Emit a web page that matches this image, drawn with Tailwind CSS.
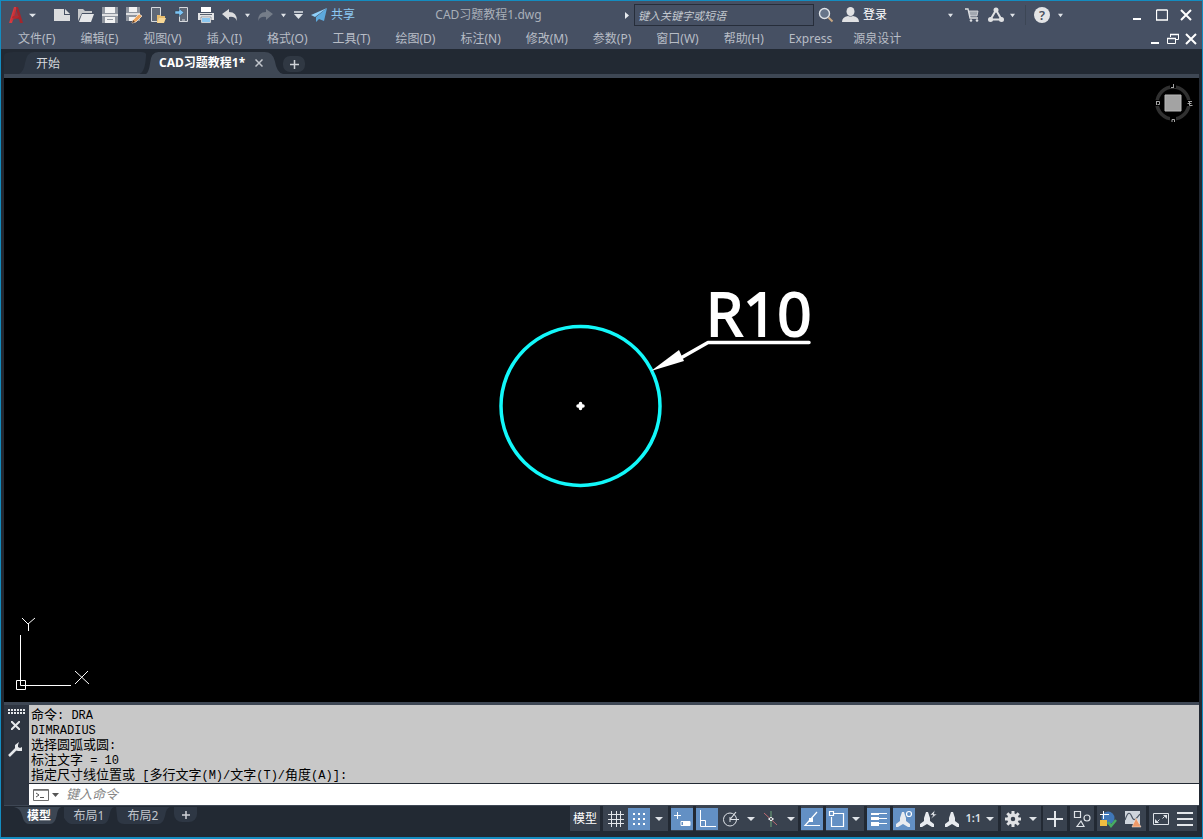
<!DOCTYPE html>
<html lang="zh-CN">
<head>
<meta charset="utf-8">
<title>CAD习题教程1.dwg</title>
<script src="https://cdn.jsdelivr.net/npm/@tailwindcss/browser@4"></script>
</head>
<body class="h-screen overflow-hidden flex flex-col bg-[#222933] border-x border-t border-b-2 border-[#148cc0] text-xs text-[#dfe3e8] font-['Noto_Sans','Noto_Sans_CJK_SC',sans-serif]">
<svg class="hidden" aria-hidden="true">
  <symbol id="dn" viewBox="0 0 8 8"><path d="M0 2h8L4 6z" fill="#dfe3e8"/></symbol>
  <symbol id="dns" viewBox="0 0 6 6"><path d="M0 1h6L3 5z" fill="#dfe3e8"/></symbol>
  <symbol id="annot" viewBox="0 0 16 18"><path d="M7 2h2l2 6v3l4 3v3h-2l-5-3-5 3H1v-3l4-3V8z" fill="#e8ebef"/></symbol>
</svg>

<header class="bg-[#465063] shrink-0">
  <div class="flex h-7 items-center">
    <button aria-label="应用程序菜单" class="w-[39px] h-6 flex items-center pl-2 gap-[5px]">
      <svg class="w-[15px] h-4" viewBox="0 0 15 16"><path d="M5 0h3L3 16H0z" fill="#d63a3f"/><path d="M7 0h2l5 16h-3l-1-4-7-1 1-2 5 0z" fill="#a3262c"/><path d="M6 1 2 14l8-4z" fill="#c02c32" opacity=".6"/></svg>
      <svg class="w-[7px] h-[7px]"><use href="#dn"/></svg>
    </button>
    <div class="flex ml-[10px]">
      <button aria-label="新建" class="size-6 grid place-items-center"><svg class="size-[18px]" viewBox="0 0 18 18"><path d="M1 3h10v6h6v6H1z" fill="#dcdddf"/><path d="M12 3 17 8h-5z" fill="#dcdddf"/></svg></button>
      <button aria-label="打开" class="size-6 grid place-items-center"><svg class="size-[18px]" viewBox="0 0 18 18"><path d="M1 15V3h5l2 2h7v2H5z" fill="#c6c8cb"/><path d="M5 8h12l-3 8H2z" fill="#e6e7e9"/></svg></button>
      <button aria-label="保存" class="size-6 grid place-items-center"><svg class="size-[18px]" viewBox="0 0 18 18"><path d="M1 1h16v16H1z" fill="#8f959f"/><path d="M4 1h10v6H4zM4 11h10v6H4z" fill="#f1f2f3"/><path d="M1 8h16v2H1z" fill="#dfe0e2"/><path d="M6 13h6v1H6z" fill="#9399a2"/></svg></button>
      <button aria-label="另存为" class="size-6 grid place-items-center"><svg class="size-[18px]" viewBox="0 0 18 18"><path d="M1 1h14v14H1z" fill="#8f959f"/><path d="M4 1h8v5H4zM4 11h6v4H4z" fill="#f1f2f3"/><path d="M1 7h14v2H1z" fill="#dfe0e2"/><path d="m8 14 6-6 3 2-6 6-4 1z" fill="#eda45c" stroke="#fff2e2" stroke-width=".7"/><path d="m7 17 1-3 2 2z" fill="#58371e"/></svg></button>
      <button aria-label="从 Web 和 Mobile 中打开" class="size-6 grid place-items-center"><svg class="size-[18px]" viewBox="0 0 18 18"><path d="M2.500 1.500h9v14h-9z" fill="#606977" stroke="#d7dade"/><path d="M8 17V9h3l1 1h4v2z" fill="#e8bd6e"/><path d="M10 12h7l-2 5H8z" fill="#f7d795"/></svg></button>
      <button aria-label="保存到 Web 和 Mobile" class="size-6 grid place-items-center"><svg class="size-[18px]" viewBox="0 0 18 18"><path d="M6.500 1.500h8v14h-8z" fill="#606977" stroke="#d7dade"/><path d="M9 14h3" stroke="#d7dade"/><path d="M2 5h4V2.500L11 6.500l-5 4V8H2z" fill="#7cc4f5" stroke="#33424f" stroke-width=".5"/></svg></button>
      <button aria-label="打印" class="size-6 grid place-items-center"><svg class="size-[18px]" viewBox="0 0 18 18"><path d="M4 1h10v5H4z" fill="#fff"/><path d="M1 7h16v7H1z" fill="#e3e4e6"/><path d="M3 8.500h12" stroke="#59616e"/><path d="M4 11h10v6H4z" fill="#fff" stroke="#59616e" stroke-width=".6"/><path d="M5 12h8v4H5z" fill="#8bc7f0"/></svg></button>
      <button aria-label="放弃" class="size-6 grid place-items-center"><svg class="size-[18px]" viewBox="0 0 18 18"><path d="M1 8l7-5v3q8 0 8 9-2-5-8-4v3z" fill="#dcdddf"/></svg></button>
      <button aria-label="放弃列表" class="w-[10px] h-6 grid place-items-center"><svg class="size-[5px]"><use href="#dns"/></svg></button>
      <button aria-label="重做" class="w-[26px] h-6 grid place-items-center"><svg class="size-[18px]" viewBox="0 0 18 18"><path d="M17 8l-7-5v3q-8 0-8 9 2-5 8-4v3z" fill="#757d89"/></svg></button>
      <button aria-label="重做列表" class="w-[10px] h-6 grid place-items-center"><svg class="size-[5px]"><use href="#dns"/></svg></button>
      <button aria-label="自定义快速访问工具栏" class="w-5 h-6 grid place-items-center"><svg class="w-[9px] h-2" viewBox="0 0 9 8"><path d="M0 1h9" stroke="#dfe3e8" stroke-width="1.500"/><path d="M0 3h9L4.500 8z" fill="#dfe3e8"/></svg></button>
    </div>
    <button class="flex items-center gap-1 ml-[3px] text-[#8cc8f2]"><svg class="w-4 h-[14px]" viewBox="0 0 16 14"><path d="M16 0 0 7l4 2z" fill="#8fd0fb"/><path d="M16 0 5 9v5l3-3 5 2z" fill="#5da9dd"/></svg>共享</button>
    <div class="flex-1 text-center text-[#a9afb9]">CAD习题教程1.dwg</div>
    <form class="flex items-center">
      <button type="button" aria-label="展开搜索" class="w-[10px] h-6 grid place-items-center"><svg class="w-1 h-[7px]" viewBox="0 0 4 7"><path d="M0 0v7l4-3.500z" fill="#e8ebef"/></svg></button>
      <input aria-label="搜索" placeholder="键入关键字或短语" class="w-[180px] h-[22px] ml-0.5 px-[3px] border border-[#262d3a] bg-[#465063] text-[11px] italic outline-none placeholder:text-[#c4c9d0]">
      <button type="button" aria-label="查找" class="size-6 grid place-items-center"><svg class="size-4" viewBox="0 0 16 16"><path d="m10.500 10.500 4 4" stroke="#c8a781" stroke-width="2"/><circle cx="6.500" cy="6.500" r="5" fill="#67758a" stroke="#dfe3e8" stroke-width="1.400"/></svg></button>
    </form>
    <button class="flex items-center gap-1 ml-1 text-white"><svg class="w-[17px] h-4" viewBox="0 0 17 16"><ellipse cx="8.500" cy="4.500" rx="4" ry="4.500" fill="#e0e1e3"/><path d="M0 15q0-5 6-6 2.500 1 5 0 6 1 6 6z" fill="#e0e1e3"/></svg>登录</button>
    <button aria-label="登录选项" class="w-[10px] h-6 ml-[58px] grid place-items-center"><svg class="size-[5px]"><use href="#dns"/></svg></button>
    <button aria-label="应用商店" class="size-6 ml-[5px] grid place-items-center"><svg class="size-[14px]" viewBox="0 0 14 14"><path d="M0 1h3l2 9h8" fill="none" stroke="#dfe1e4" stroke-width="1.300"/><path d="M4 3h9l-1 5H5z" fill="#a2a8b1" stroke="#dfe1e4" stroke-width=".8"/><circle cx="6" cy="12.500" r="1.300" fill="#dfe1e4"/><circle cx="12" cy="12.500" r="1.300" fill="#dfe1e4"/></svg></button>
    <button aria-label="Autodesk App" class="w-6 h-6 grid place-items-center"><svg class="size-4" viewBox="0 0 16 16"><path d="M8 3 2.500 12.500h11z" fill="none" stroke="#e0e1e3" stroke-width="2"/><circle cx="8" cy="3" r="2.500" fill="#e0e1e3"/><circle cx="2.500" cy="12.500" r="2.500" fill="#e0e1e3"/><circle cx="13.500" cy="12.500" r="2.500" fill="#e0e1e3"/></svg></button>
    <button aria-label="App 选项" class="w-[9px] h-6 grid place-items-center"><svg class="size-[5px]"><use href="#dns"/></svg></button>
    <span class="w-px h-5 bg-[#3c4655] ml-2"></span>
    <button aria-label="帮助" class="size-6 ml-1 grid place-items-center"><span class="size-4 rounded-full bg-[#e3e4e6] text-[#48505d] font-semibold text-[13px] leading-4">?</span></button>
    <button aria-label="帮助选项" class="w-3 h-6 grid place-items-center"><svg class="size-[5px]"><use href="#dns"/></svg></button>
    <div class="flex ml-[58px] mr-1">
      <button aria-label="最小化" class="w-[25px] h-6 grid place-items-center"><svg class="size-3" viewBox="0 0 12 12"><path d="M2 10h8" stroke="#fff" stroke-width="2"/></svg></button>
      <button aria-label="最大化" class="w-[25px] h-6 grid place-items-center"><svg class="size-3" viewBox="0 0 12 12"><path d="M.5 1h11M.5 1v10h11V1" fill="none" stroke="#fff" stroke-width="1.300"/></svg></button>
      <button aria-label="关闭" class="w-6 h-6 grid place-items-center"><svg class="size-3" viewBox="0 0 12 12"><path d="m1 1 10 10M11 1 1 11" stroke="#fff" stroke-width="2"/></svg></button>
    </div>
  </div>
  <nav class="flex h-5 items-center pl-[17px] gap-[25px] whitespace-nowrap text-[#b8bdc6]">
    <a href="#">文件(F)</a><a href="#">编辑(E)</a><a href="#">视图(V)</a><a href="#">插入(I)</a><a href="#">格式(O)</a><a href="#">工具(T)</a><a href="#">绘图(D)</a><a href="#">标注(N)</a><a href="#">修改(M)</a><a href="#">参数(P)</a><a href="#">窗口(W)</a><a href="#">帮助(H)</a><a href="#">Express</a><a href="#" class="-ml-1">源泉设计</a>
    <div class="ml-auto flex mr-0.5">
      <button aria-label="最小化图形" class="w-[18px] h-5 grid place-items-center"><svg class="size-3" viewBox="0 0 12 12"><path d="M2 10h8" stroke="#fff" stroke-width="2"/></svg></button>
      <button aria-label="还原图形" class="w-[18px] h-5 grid place-items-center"><svg class="size-3" viewBox="0 0 12 12"><path d="M3.500 4V1.500h8v5H9M.5 5.500h8v5h-8z" fill="none" stroke="#fff"/><path d="M3 1.500h9M0 5.500h9" stroke="#fff" stroke-width="1.600"/></svg></button>
      <button aria-label="关闭图形" class="w-[18px] h-5 grid place-items-center"><svg class="size-3" viewBox="0 0 12 12"><path d="m1 1 10 10M11 1 1 11" stroke="#fff" stroke-width="2"/></svg></button>
    </div>
  </nav>
</header>

<div class="flex items-start h-[25px] shrink-0 pt-[3px] pl-[3px]">
  <div class="relative h-[22px] w-[142px]">
    <svg class="absolute inset-0 w-full h-full" viewBox="0 0 142 22" preserveAspectRatio="none"><path d="M0 22h16q5-3 6-11 2-10 9-11H9Q0 0 0 4z" fill="#262e39"/><path d="M15 22q5-3 6-11 2-11 9-11h107q6 0 5 4-1 18-8 18z" fill="#2e3744"/></svg>
    <button class="relative pl-8 leading-6 text-[#d5d8dd]">开始</button>
  </div>
  <div class="relative h-[22px] w-[137px] flex items-center pl-[13px] gap-[10px]">
    <svg class="absolute inset-0 w-full h-full" viewBox="0 0 134 22" preserveAspectRatio="none"><path d="M0 22Q3 20 4 11 5 0 12 0h104q8 0 10 9 2 12 8 13z" fill="#3e4754"/></svg>
    <button class="relative font-bold text-white whitespace-nowrap">CAD习题教程1*</button>
    <button aria-label="关闭选项卡" class="relative"><svg class="size-2" viewBox="0 0 8 8"><path d="m.5.5 7 7m0-7-7 7" stroke="#c2c6cc" stroke-width="1.500"/></svg></button>
  </div>
  <button aria-label="新选项卡" class="w-[22px] h-4 mt-1 grid place-items-center rounded-[7px] bg-[#303843]"><svg class="size-[9px]" viewBox="0 0 9 9"><path d="M0 4.500h9M4.500 0v9" stroke="#cfd2d7" stroke-width="1.500"/></svg></button>
</div>
<div class="h-1 shrink-0 bg-[#3e4754] mx-[3px]"></div>

<main class="flex-1 min-h-0 relative bg-black mx-[3px]">
  <svg class="absolute inset-0 w-full h-full" viewBox="0 0 1195 624">
    <circle cx="576.500" cy="328" r="79.500" fill="none" stroke="#12f8fa" stroke-width="3.500"/>
    <path d="M576.500 325.500v5M574 328h5" stroke="#fff" stroke-width="3.500" stroke-linecap="round"/>
    <path d="M675 281 704 264.500h101" fill="none" stroke="#fff" stroke-width="3.500" stroke-linecap="round" stroke-linejoin="round"/>
    <path d="M647 293 675 272l5 11z" fill="#fff"/>
    <text x="702" y="258" fill="#fff" stroke="#fff" stroke-width="2" font-size="60" style="font-family:'Open Sans',sans-serif">R10</text>
  </svg>
  <svg class="absolute top-1 right-0 w-11 h-[42px]" viewBox="0 0 44 42">
    <circle cx="18" cy="21" r="16" fill="none" stroke="#303030" stroke-width="3.500"/>
    <path d="M10 13h16v16H10z" fill="#a3a3a3" stroke="#b8b8b8"/>
    <path d="M15 1h6v5h-6zM15 35h6v5h-6zM0 18h5v6H0zM32 18h5v6h-5z" fill="#000"/>
    <path d="M18.500 2v3.500M16 5.500h3M17 40v-2.500h2.500V40M1.500 19v4M1.500 19.500h3v3h-2M33 19.500h4M32.500 21.500h4M34.500 19v4.500h3" fill="none" stroke="#a5a5a5"/>
  </svg>
  <svg class="absolute left-0 bottom-0 w-[100px] h-[100px]" viewBox="0 0 100 100" fill="none" stroke="#fff">
    <path d="M16.500 33v50.500H67M12.500 78.500h9v9h-9zM18 16l6 6 7-6M24.500 22v7M71 69l14 13M84 69 71 82"/>
  </svg>
</main>

<section aria-label="命令行" class="shrink-0 mx-[3px] border-t-[3px] border-[#3e4754] flex bg-[#2e3541]">
  <div class="w-[25px] flex flex-col items-center pr-0.5 pt-1">
    <svg class="w-[18px] h-[5px] ml-0.5" viewBox="0 0 18 5"><path d="M0 1h18M0 4h18" stroke="#e6e8eb" stroke-width="2" stroke-dasharray="2 1"/></svg>
    <button aria-label="关闭命令行" class="mt-[7px]"><svg class="size-[9px]" viewBox="0 0 9 9"><path d="m0 0 9 9M9 0 0 9" stroke="#e6e8eb" stroke-width="2"/></svg></button>
    <button aria-label="自定义" class="mt-3"><svg class="w-[15px] h-4" viewBox="0 0 15 16"><path d="m1 14 8-8" stroke="#e6e8eb" stroke-width="2.500"/><path d="M11 0 7 3v5l3 1h4V5l-2 1-2-1V3z" fill="#e6e8eb"/></svg></button>
  </div>
  <div class="flex-1 min-w-0">
    <div class="h-[79px] bg-[#c8c8c8] border-b border-[#222933] pt-[3px] pl-0.5 text-black text-[13px] leading-[15px] whitespace-pre font-['Liberation_Mono','Noto_Sans_CJK_SC',monospace] *:h-[15px]"><p>命令<span class="text-xs">: DRA</span></p><p><span class="text-xs">DIMRADIUS</span></p><p>选择圆弧或圆<span class="text-xs">:</span></p><p>标注文字<span class="text-xs"> = 10</span></p><p>指定尺寸线位置或<span class="text-xs"> [</span>多行文字<span class="text-xs">(M)/</span>文字<span class="text-xs">(T)/</span>角度<span class="text-xs">(A)]:</span></p></div>
    <div class="h-[21px] bg-white flex items-center pl-1">
      <button aria-label="最近使用的命令" class="flex items-center gap-[3px]"><svg class="w-4 h-3" viewBox="0 0 16 12"><path d="M.5.5h15v11H.5z" fill="#fff" stroke="#6d6d6d"/><path d="M1 1.500h14" stroke="#8d8d8d"/><path d="m3 4 3 2-3 2M7 8.500h4" fill="none" stroke="#555"/></svg><svg class="w-[7px] h-1" viewBox="0 0 7 4"><path d="M0 0h7L3.500 4z" fill="#555"/></svg></button>
      <input aria-label="命令" placeholder="键入命令" class="flex-1 ml-[7px] text-[13px] text-black italic outline-none placeholder:text-[#858585]">
    </div>
  </div>
</section>

<footer class="shrink-0 h-8 flex items-start border-t border-[#3e4754] mx-[3px]">
  <div class="flex pl-[10px] pt-px">
    <button class="relative w-[50px] h-[17px] font-bold text-white"><svg class="absolute inset-0 w-full h-full" viewBox="0 0 54 17" preserveAspectRatio="none"><path d="M0 0h51q-4 1-5 9-2 8-7 8H16q-5 0-7-8Q7 1 0 0z" fill="#3c4653"/></svg><span class="relative leading-[17px] block">模型</span></button>
    <button class="relative w-[50px] h-[17px] text-[#c2c6cd]"><svg class="absolute inset-0 w-full h-full" viewBox="0 0 54 17" preserveAspectRatio="none"><path d="M0 0h54q-4 1-5 9-2 8-7 8H8q-5 0-9-8z" fill="#2e3744"/></svg><span class="relative leading-[17px] block">布局1</span></button>
    <button class="relative w-[54px] h-[17px] ml-0.5 text-[#c2c6cd]"><svg class="absolute inset-0 w-full h-full" viewBox="0 0 54 17" preserveAspectRatio="none"><path d="M0 0h54q-4 1-5 9-2 8-7 8H8q-7 0-7-8z" fill="#2e3744"/></svg><span class="relative leading-[17px] block">布局2</span></button>
    <button aria-label="新建布局" class="w-[23px] h-[15px] ml-1 grid place-items-center bg-[#2e3744] rounded-b-lg"><svg class="size-2" viewBox="0 0 8 8"><path d="M0 4h8M4 0v8" stroke="#cfd2d7" stroke-width="1.500"/></svg></button>
  </div>
  <div class="ml-auto mr-0.5 flex h-[25px] gap-[3px] *:bg-[#39424f] *:flex *:items-center">
    <div><button class="w-[30px] text-white">模型</button></div>
    <div>
      <button aria-label="栅格" class="w-[25px] h-[22px] grid place-items-center"><svg class="size-4" viewBox="0 0 16 16"><path d="M3.500 0v16M8.500 0v16M12.500 0v16M0 3.500h16M0 8.500h16M0 12.500h16" stroke="#e3e6ea" fill="none"/></svg></button>
      <button aria-label="捕捉" class="w-[22px] h-[22px] grid place-items-center bg-[#6390c4]"><svg class="size-[14px]" viewBox="0 0 14 14"><path d="M1 2h14M1 7h14M1 12h14" stroke="#fff" stroke-width="2" stroke-dasharray="2 3"/></svg></button>
      <button aria-label="捕捉选项" class="w-[18px] h-[22px] grid place-items-center"><svg class="size-2"><use href="#dn"/></svg></button>
    </div>
    <div><button aria-label="动态输入" class="w-[22px] h-[22px] grid place-items-center bg-[#6390c4]"><svg class="size-[18px]" viewBox="0 0 18 18"><path d="M4.500 2v7M1 5.500h7M8 11.500h9v4H8z" stroke="#fff" fill="none"/><path d="M10 11h7v5h-7z" fill="#fff"/></svg></button></div>
    <div>
      <button aria-label="正交" class="w-[22px] h-[22px] grid place-items-center bg-[#6390c4]"><svg class="size-[18px]" viewBox="0 0 18 18"><path d="M2.500 0v16.500H18M2.500 10.500h5v6" stroke="#fff" fill="none"/></svg></button>
      <button aria-label="极轴追踪" class="w-[26px] h-[22px] grid place-items-center"><svg class="size-[18px]" viewBox="0 0 18 18"><circle cx="8" cy="9.500" r="6.500" fill="none" stroke="#dfe3e8"/><path d="M8 9.500 14 2M8 9.500h9" stroke="#dfe3e8" stroke-width="1.200"/><path d="M8 7v5" stroke="#dfe3e8"/></svg></button>
      <button aria-label="极轴选项" class="w-[14px] h-[22px] grid place-items-center"><svg class="size-2"><use href="#dn"/></svg></button>
      <button aria-label="等轴测草图" class="w-[26px] h-[22px] grid place-items-center"><svg class="size-4" viewBox="0 0 16 16"><path d="M8 0v16" stroke="#6fa67c"/><path d="m1 2 13 12" stroke="#bd6a72"/><path d="M5 8h6" stroke="#dfe3e8"/><circle cx="8" cy="8" r="1.500" fill="#222933" stroke="#fff"/></svg></button>
      <button aria-label="等轴测选项" class="w-[14px] h-[22px] grid place-items-center"><svg class="size-2"><use href="#dn"/></svg></button>
    </div>
    <div><button aria-label="对象捕捉追踪" class="w-[22px] h-[22px] grid place-items-center bg-[#6390c4]"><svg class="size-[18px]" viewBox="0 0 18 18"><path d="M14 2 2 15.500h15" stroke="#fff" stroke-width="1.200" fill="none"/><path d="M6 8h4v4H6z" fill="#fff"/></svg></button></div>
    <div>
      <button aria-label="对象捕捉" class="w-[22px] h-[22px] grid place-items-center bg-[#6390c4]"><svg class="size-[18px]" viewBox="0 0 18 18"><path d="M6 3.500h9.500v13h-12V7M1.500 1.500h4v4h-4z" stroke="#fff" fill="none" stroke-width="1.200"/></svg></button>
      <button aria-label="对象捕捉选项" class="w-4 h-[22px] grid place-items-center"><svg class="size-2"><use href="#dn"/></svg></button>
    </div>
    <div><button aria-label="线宽" class="w-[23px] h-[22px] grid place-items-center bg-[#6390c4]"><svg class="size-[18px]" viewBox="0 0 18 18"><path d="M1 3.500h16M1 8.500h16M1 13.500h16" stroke="#fff"/><path d="M1 3h8v2H1zM1 7h8v3H1zM1 12h8v4H1z" fill="#fff"/></svg></button></div>
    <div>
      <button aria-label="注释可见性" class="w-[22px] h-[22px] grid place-items-center bg-[#6390c4]"><svg class="size-[18px]" viewBox="0 0 18 18"><use href="#annot" x="0" y="0" width="16" height="18"/><circle cx="14" cy="4" r="2.500" fill="#6390c4" stroke="#fff" stroke-width="1.200"/></svg></button>
      <button aria-label="自动缩放" class="w-[26px] h-[22px] grid place-items-center"><svg class="size-[18px]" viewBox="0 0 18 18"><use href="#annot" x="0" y="0" width="16" height="18"/><path d="m16 0-5 5h3l-2 4 6-5h-3z" fill="#e8ebef" stroke="#39424f" stroke-width=".6"/></svg></button>
      <button aria-label="注释比例" class="w-[22px] h-[22px] grid place-items-center"><svg class="w-4 h-[18px]"><use href="#annot"/></svg></button>
      <button class="w-[31px] h-[22px] flex items-center justify-end gap-[5px] text-[11px] font-semibold">1:1<svg class="size-2"><use href="#dn"/></svg></button>
      <span class="w-1"></span>
    </div>
    <div>
      <button aria-label="切换工作空间" class="w-[23px] h-[22px] grid place-items-center"><svg class="size-4" viewBox="0 0 16 16"><circle cx="8" cy="8" r="4" fill="none" stroke="#dfe1e4" stroke-width="3.500"/><path d="M8 0v3M8 13v3M0 8h3M13 8h3M2.300 2.300l2.200 2.200M11.500 11.500l2.200 2.200M13.700 2.300l-2.200 2.200M4.500 11.500l-2.200 2.200" stroke="#dfe1e4" stroke-width="3"/></svg></button>
      <button aria-label="工作空间选项" class="w-[17px] h-[22px] grid place-items-center"><svg class="size-2"><use href="#dn"/></svg></button>
    </div>
    <div class="-ml-px"><button aria-label="注释监视器" class="w-6 h-[22px] grid place-items-center"><svg class="size-4" viewBox="0 0 16 16"><path d="M8 0v16M0 8h16" stroke="#e3e6ea" stroke-width="2"/></svg></button></div>
    <div><button aria-label="隔离对象" class="w-6 h-[22px] grid place-items-center"><svg class="size-[18px]" viewBox="0 0 18 18"><path d="M1.500 1.500h6v6h-6zM8 11l-4 5.500h7z" fill="none" stroke="#dfe3e8" stroke-width="1.200"/><circle cx="14" cy="8" r="3" fill="none" stroke="#dfe3e8" stroke-width="1.200"/></svg></button></div>
    <div>
      <button aria-label="硬件加速" class="w-[22px] h-[22px] grid place-items-center"><svg class="size-[18px]" viewBox="0 0 18 18"><circle cx="9" cy="8" r="6.500" fill="#3f77b8"/><path d="M1 10h7v6H1z" fill="#efbd41"/><path d="M4.500 1v8M1 4.500h9" stroke="#fff"/><path d="m9 12 3 4 5-6" fill="none" stroke="#47ad62" stroke-width="2.500"/></svg></button>
      <button aria-label="图形性能" class="w-[27px] h-[22px] grid place-items-center"><svg class="size-[18px]" viewBox="0 0 18 18"><path d="M1 1h15v13H1z" fill="#cfd5dc"/><path d="M1 10C4 1 6 2 8 7s4 2 8-3" fill="none" stroke="#4b5563" stroke-width="1.200"/><path d="m12 8 5 9H8z" fill="#ef9a69" stroke="#fff2e6" stroke-width=".5"/></svg></button>
    </div>
    <div>
      <button aria-label="全屏显示" class="w-6 h-[22px] grid place-items-center"><svg class="w-4 h-3" viewBox="0 0 16 12"><path d="M.5.5h15v11H.5zM9.500 5.500l2-2M6.500 6.500l-2 2" fill="none" stroke="#dfe3e8"/><path d="M10 2h4v4zM6 10H2V6z" fill="#dfe3e8"/></svg></button>
      <button aria-label="自定义状态栏" class="w-6 h-[22px] grid place-items-center"><svg class="w-4 h-[14px]" viewBox="0 0 16 14"><path d="M0 1h16M0 7h16M0 13h16" stroke="#e3e6ea" stroke-width="1.800"/></svg></button>
    </div>
  </div>
</footer>
</body>
</html>
